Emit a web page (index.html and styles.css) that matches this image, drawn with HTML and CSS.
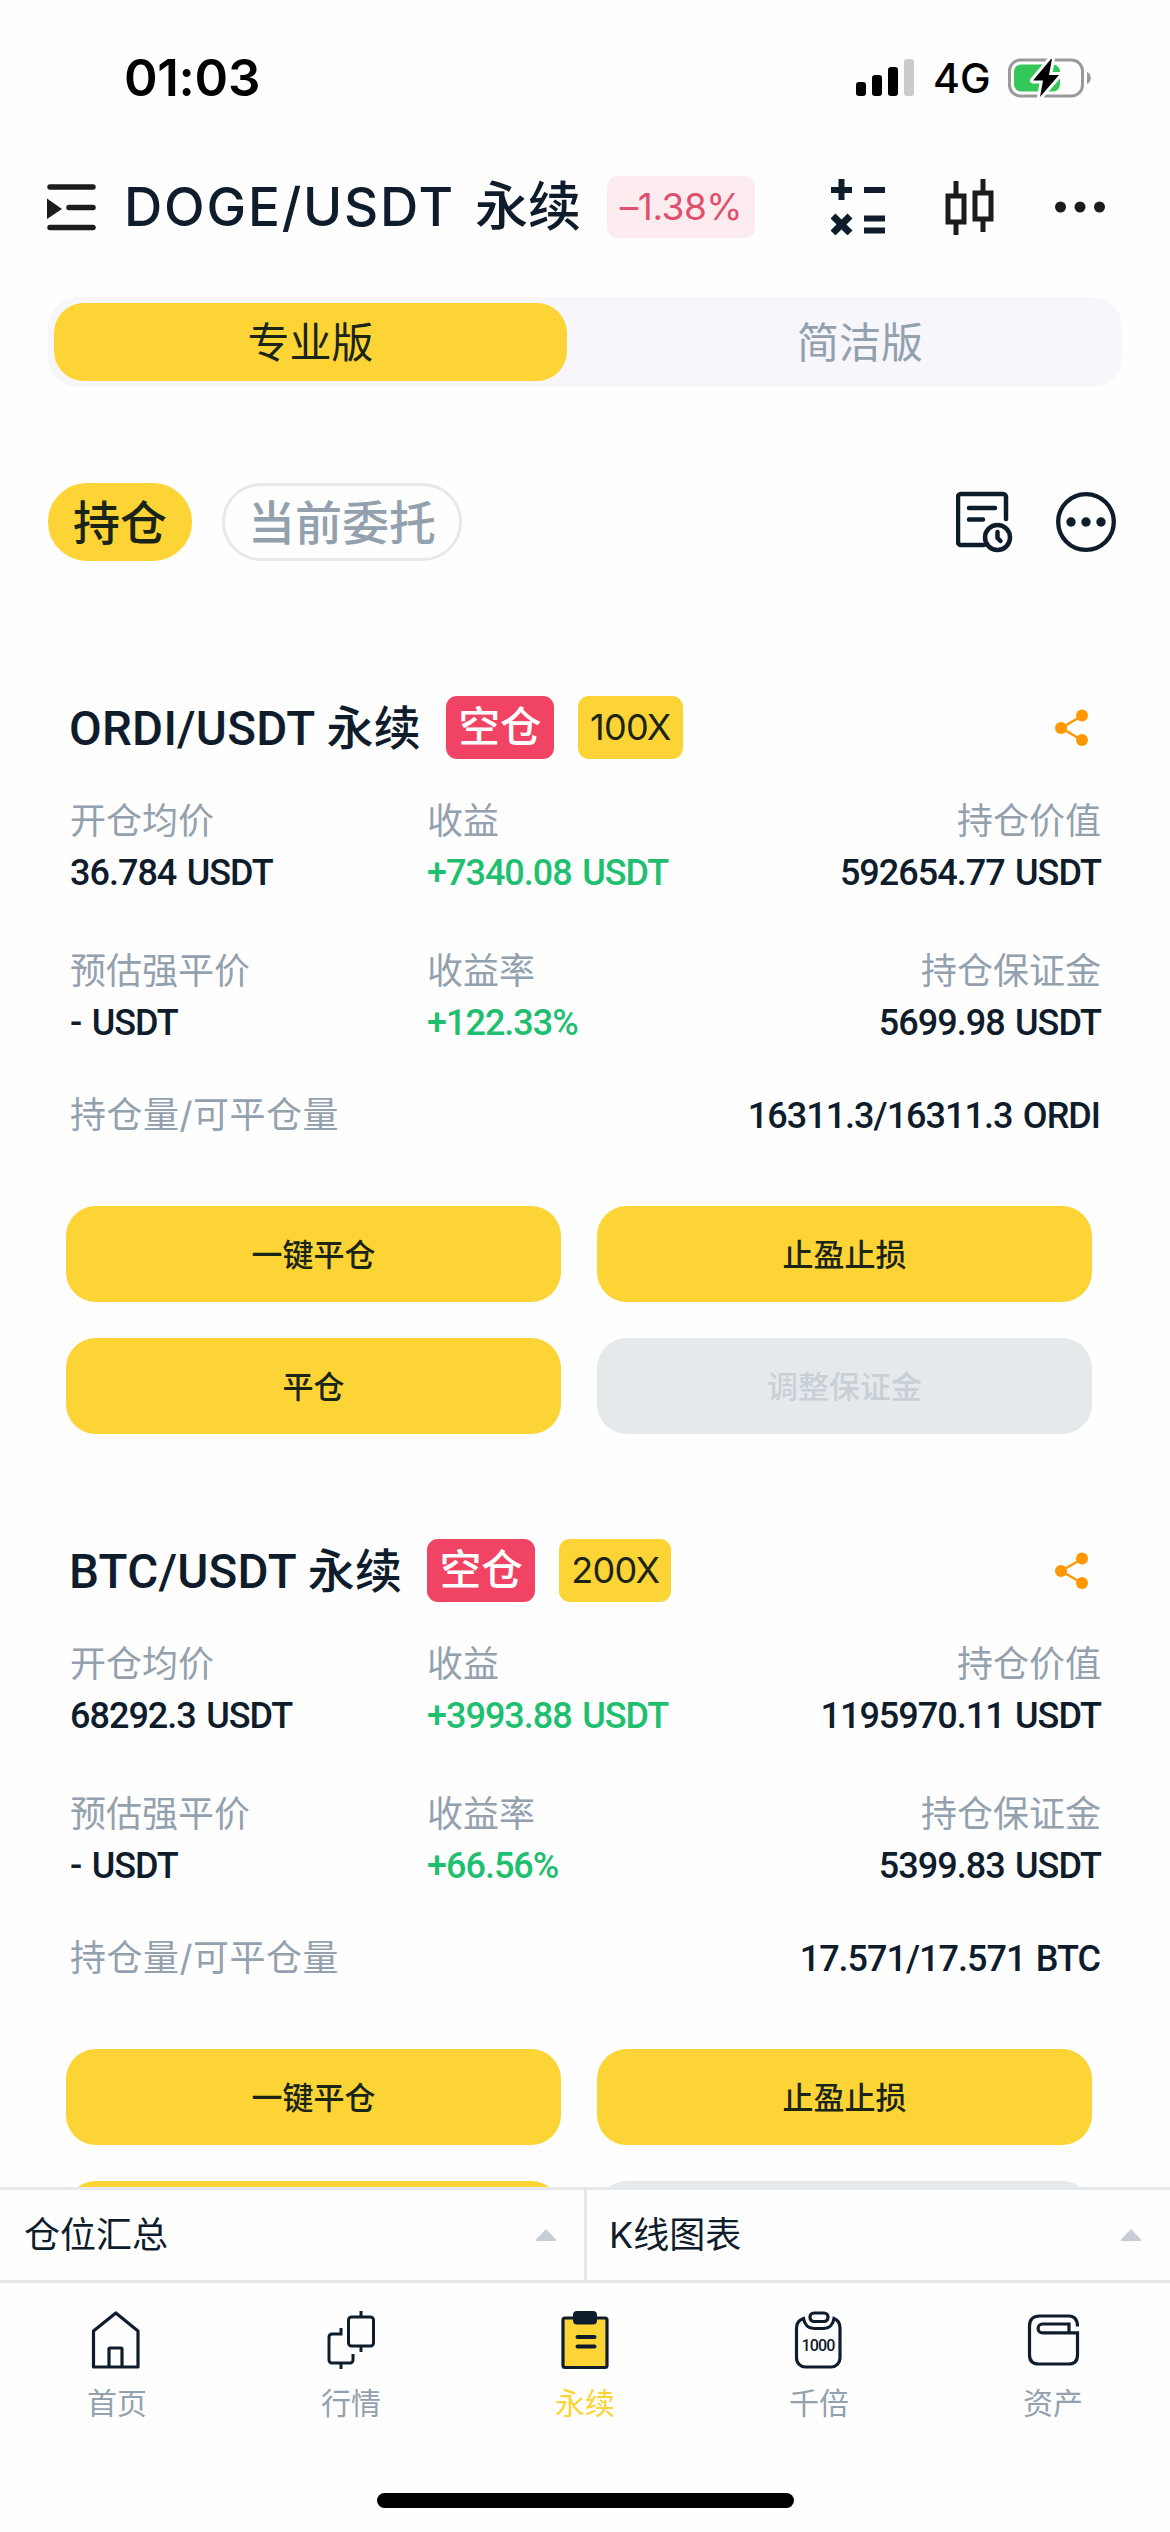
FILE: index.html
```html
<!DOCTYPE html>
<html lang="zh-CN">
<head>
<meta charset="utf-8">
<title>DOGE/USDT 永续</title>
<link rel="stylesheet" href="styles.css">
</head>
<body>
<div class="screen">
  <header class="status">
    <span class="time">01:03</span>
    <div class="status-right">
      <svg class="signal" width="58" height="38" viewBox="0 0 58 38"><rect x="0" y="23" width="10" height="14" rx="3"/><rect x="16" y="16" width="10" height="21" rx="3"/><rect x="32" y="8" width="10" height="29" rx="3"/><rect x="48" y="0" width="10" height="37" rx="3" fill="#cbcbcb"/></svg>
      <span class="net">4G</span>
      <svg class="battery" width="84" height="44" viewBox="0 0 84 44"><rect x="1.500" y="4" width="73" height="36" rx="11" fill="none" stroke="#999" stroke-width="3"/><path d="M79 16c5 2 5 10 0 12z" fill="#999"/><rect x="6" y="8.500" width="46" height="27" rx="7" fill="#35c759"/><path d="M43 3L25 24.500H35L32 41L51 19H41L44 3z" fill="#000" stroke="#fff" stroke-width="6" paint-order="stroke" stroke-linejoin="round"/></svg>
    </div>
  </header>

  <nav class="pair-bar">
    <svg class="menu" width="50" height="48" viewBox="0 0 50 48"><g stroke="#1c1c1e" stroke-width="5.500" stroke-linecap="round"><path d="M3 4H46M22 24.500H46M3 44.500H46"/></g><path d="M0 15.500L15 26L0 36z" fill="#1c1c1e"/></svg>
    <h1 class="pair"><span class="pair-latin">DOGE/USDT</span><span class="pair-cn">永续</span></h1>
    <span class="change">–1.38%</span>
    <div class="bar-icons">
      <svg width="54" height="56" viewBox="0 0 54 56"><g fill="none" stroke="#0e1c2b" stroke-width="6"><path d="M0 11H21M10.500 0V21M33 11H54M33 39.500H54M33 51.500H54"/><path d="M2 37L19 54M19 37L2 54" stroke-width="7"/></g></svg>
      <svg width="50" height="58" viewBox="0 0 50 58"><g fill="none" stroke="#1c1c1e" stroke-width="5"><path d="M11 3V17M11 44V57M38 1V14M38 41V54"/><rect x="3" y="18" width="16" height="26"/><rect x="30" y="15" width="16" height="26"/></g></svg>
      <svg width="50" height="12" viewBox="0 0 50 12" fill="#1c1c1e"><circle cx="5.500" cy="6" r="5.500"/><circle cx="25" cy="6" r="5.500"/><circle cx="44.500" cy="6" r="5.500"/></svg>
    </div>
  </nav>

  <div class="segment">
    <span class="seg seg-on">专业版</span>
    <span class="seg">简洁版</span>
  </div>

  <div class="tabs">
    <span class="tab tab-on">持仓</span>
    <span class="tab">当前委托</span>
    <div class="tab-icons">
      <svg width="58" height="62" viewBox="0 0 58 62"><g fill="none" stroke="#0e1c2b" stroke-width="4.500" stroke-linecap="round" stroke-linejoin="round"><path d="M50 28V6a3 3 0 0 0-3-3H5a3 3 0 0 0-3 3V51a3 3 0 0 0 3 3H28"/><path d="M13 17H39M13 28.500H27"/><circle cx="41.500" cy="46.500" r="12.500" fill="#fff"/><path d="M41.500 41V47L44.500 50"/></g></svg>
      <svg width="60" height="60" viewBox="0 0 60 60"><circle cx="30" cy="30" r="27.800" fill="none" stroke="#0e1c2b" stroke-width="4.300"/><g fill="#0e1c2b"><circle cx="15" cy="30" r="4.700"/><circle cx="30" cy="30" r="4.700"/><circle cx="45" cy="30" r="4.700"/></g></svg>
    </div>
  </div>

  <main class="positions">
    <section class="card">
      <div class="card-head">
        <h2 class="name">ORDI/USDT <b>永续</b></h2><span class="side">空仓</span><span class="lever">100X</span>
        <svg class="share" width="34" height="38" viewBox="0 0 34 38"><path d="M27 7L6 19L27 31" fill="none" stroke="#ff9800" stroke-width="2.500"/><g fill="#ff9800"><circle cx="27" cy="6.500" r="6"/><circle cx="6" cy="19" r="6"/><circle cx="27" cy="31" r="6"/></g></svg>
      </div>
      <dl class="stats">
        <div><dt>开仓均价</dt><dd>36.784 USDT</dd></div>
        <div><dt>收益</dt><dd class="up">+7340.08 USDT</dd></div>
        <div class="end"><dt>持仓价值</dt><dd>592654.77 USDT</dd></div>
        <div><dt>预估强平价</dt><dd>- USDT</dd></div>
        <div><dt>收益率</dt><dd class="up">+122.33%</dd></div>
        <div class="end"><dt>持仓保证金</dt><dd>5699.98 USDT</dd></div>
      </dl>
      <dl class="amount"><dt>持仓量/可平仓量</dt><dd>16311.3/16311.3 ORDI</dd></dl>
      <div class="actions">
        <span class="btn">一键平仓</span><span class="btn">止盈止损</span>
        <span class="btn">平仓</span><span class="btn btn-off">调整保证金</span>
      </div>
    </section>
    <section class="card">
      <div class="card-head">
        <h2 class="name">BTC/USDT <b>永续</b></h2><span class="side">空仓</span><span class="lever">200X</span>
        <svg class="share" width="34" height="38" viewBox="0 0 34 38"><path d="M27 7L6 19L27 31" fill="none" stroke="#ff9800" stroke-width="2.500"/><g fill="#ff9800"><circle cx="27" cy="6.500" r="6"/><circle cx="6" cy="19" r="6"/><circle cx="27" cy="31" r="6"/></g></svg>
      </div>
      <dl class="stats">
        <div><dt>开仓均价</dt><dd>68292.3 USDT</dd></div>
        <div><dt>收益</dt><dd class="up">+3993.88 USDT</dd></div>
        <div class="end"><dt>持仓价值</dt><dd>1195970.11 USDT</dd></div>
        <div><dt>预估强平价</dt><dd>- USDT</dd></div>
        <div><dt>收益率</dt><dd class="up">+66.56%</dd></div>
        <div class="end"><dt>持仓保证金</dt><dd>5399.83 USDT</dd></div>
      </dl>
      <dl class="amount"><dt>持仓量/可平仓量</dt><dd>17.571/17.571 BTC</dd></dl>
      <div class="actions">
        <span class="btn">一键平仓</span><span class="btn">止盈止损</span>
        <span class="btn"></span><span class="btn btn-off"></span>
      </div>
    </section>
  </main>

  <div class="drawers">
    <div class="drawer"><span>仓位汇总</span><svg width="20" height="12" viewBox="0 0 20 12"><path d="M10 0L20 10.500V12H0V10.500z" fill="#c6cdd5"/></svg></div>
    <div class="drawer"><span>K线图表</span><svg width="20" height="12" viewBox="0 0 20 12"><path d="M10 0L20 10.500V12H0V10.500z" fill="#c6cdd5"/></svg></div>
  </div>

  <footer class="nav">
    <div class="nav-item"><svg width="60" height="60" viewBox="0 0 60 60"><g fill="none" stroke="#0e1c2b" stroke-width="3.200" stroke-linejoin="round"><path d="M6.500 21L28.800 3L51 21V57H6.500z"/><path d="M22 57V39a1 1 0 0 1 1-1H34a1 1 0 0 1 1 1V57"/></g></svg><span>首页</span></div>
    <div class="nav-item"><svg width="60" height="60" viewBox="0 0 60 60"><g fill="none" stroke="#0e1c2b" stroke-width="3"><rect x="27.500" y="7" width="25" height="29" rx="3"/><path d="M40 1V7M40 36V42"/><path d="M20 18V24H11a3 3 0 0 0-3 3V50a3 3 0 0 0 3 3H29a3 3 0 0 0 3-3V44M20 53V59"/></g></svg><span>行情</span></div>
    <div class="nav-item on"><svg width="60" height="60" viewBox="0 0 60 60"><rect x="8" y="8" width="44" height="49.500" rx="2" fill="#fcd435" stroke="#0e1c2b" stroke-width="3.200"/><rect x="18" y="1" width="24" height="13.500" rx="4" fill="#0e1c2b"/><path d="M22.500 27H39.500M22.500 36.500H39.500" stroke="#0e1c2b" stroke-width="4" stroke-linecap="round"/></svg><span>永续</span></div>
    <div class="nav-item"><svg width="60" height="60" viewBox="0 0 60 60"><g fill="none" stroke="#0e1c2b" stroke-width="3.200"><rect x="21" y="3" width="18" height="8.500" rx="4"/><path d="M14.500 8.500C10 10 7.500 13 7.500 18V48a9 9 0 0 0 9 9H42a9 9 0 0 0 9-9V18C51 13 49 10 45 8.500C44 15 40 18.500 35 18.500H25C20 18.500 15.500 15 14.500 8.500z"/></g><text x="29" y="41" text-anchor="middle" class="k">1000</text></svg><span>千倍</span></div>
    <div class="nav-item"><svg width="60" height="60" viewBox="0 0 60 60"><g fill="none" stroke="#0e1c2b" stroke-width="3.200"><path d="M54.500 16.500C54.500 9 51.500 6 45.500 6H17C10 6 6.500 9 6.500 16V45C6.500 51 10 54 16 54H45.500C51.500 54 54.500 51 54.500 45V22.800H19.500a4.400 4.400 0 0 1 0-8.800H46V22.800"/></g></svg><span>资产</span></div>
  </footer>
  <div class="home-bar"></div>
</div>
</body>
</html>
```

FILE: styles.css
```css
* { box-sizing: border-box; margin: 0; padding: 0; }
body { background: #fff; color: #0e1c2b; font-family: "Inter", "Noto Sans CJK SC", sans-serif; }
svg { display: block; flex: none; }
span, h1, h2, dt, dd { white-space: nowrap; }
.screen { width: 1170px; height: 2532px; background: #fefefe; display: flex; flex-direction: column; overflow: hidden; }

.status { height: 156px; flex: none; display: flex; justify-content: space-between; padding: 0 78px 0 124px; color: #000; }
.time { font-size: 51px; font-weight: 600; line-height: 60px; padding-top: 48px; letter-spacing: -0.300px; }
.status-right { display: flex; align-items: center; height: 156px; }
.signal { margin-right: 19px; }
.net { font-size: 41px; line-height: 44px; width: 57px; margin-right: 18px; font-weight: 500; }

.pair-bar { height: 102px; flex: none; display: flex; align-items: center; padding: 0 65px 0 47px; }
.menu { margin-right: 27px; }
.pair { display: flex; gap: 20px; align-items: center; font-size: 53px; font-weight: 500; line-height: 70px; }
.pair-latin { width: 331px; letter-spacing: 1.800px; }
.change { width: 148px; height: 62px; margin-left: 26px; border-radius: 10px; background: #fcebef; color: #e0506e; font-size: 37px; line-height: 62px; text-align: center; letter-spacing: -0.500px; }
.bar-icons { margin-left: auto; display: flex; align-items: center; gap: 60px; }

.segment { height: 90px; flex: none; margin: 39px 48px 0; background: #f6f6fb; border-radius: 30px; display: flex; padding: 6px; }
.seg { width: 549px; padding: 1px 0 0 37px; text-align: center; font-size: 42px; line-height: 78px; color: #93a1ae; border-radius: 30px; }
.seg-on { width: 513px; padding-left: 0; background: #fcd435; color: #1a2417; }

.tabs { height: 78px; flex: none; margin: 96px 54px 0 48px; display: flex; align-items: center; }
.tab { height: 78px; border: 3px solid #e6e9ec; border-radius: 39px; font-size: 47px; font-weight: 500; line-height: 73px; color: #93a1ae; margin-left: 30px; width: 240px; text-align: center; }
.tab-on { width: 144px; margin-left: 0; background: #fcd435; border-color: #fcd435; color: #1a2417; }
.tab-icons { margin-left: auto; display: flex; gap: 42px; align-items: center; }

.positions { height: 1626px; flex: none; padding-top: 135px; overflow: hidden; }
.card { height: 843px; }
.card-head { height: 63px; display: flex; align-items: center; padding: 0 81px 0 69px; }
.name { font-family: "Roboto", "Noto Sans CJK SC", sans-serif; font-size: 47.500px; font-weight: 500; line-height: 63px; padding-top: 2px; letter-spacing: 0.250px; }
.name b { font-weight: 500; font-size: 47px; }
.side, .lever { height: 63px; border-radius: 11px; text-align: center; margin-left: 24px; line-height: 63px; }
.side { width: 108px; background: #f14465; color: #fff; font-size: 41.500px; font-weight: 500; margin-left: 25px; }
.lever { padding: 0 12px; background: #fcd435; color: #1a2417; font-size: 36px; letter-spacing: -0.700px; }
.share { margin-left: auto; }

.stats { display: grid; grid-template-columns: 357px 357px 1fr; grid-template-rows: 150px 150px; padding: 33px 69px 0 70px; }
dt { font-size: 36px; line-height: 58px; color: #93a1ae; }
dd { font-family: "Roboto", sans-serif; font-size: 36px; font-weight: 500; line-height: 46px; letter-spacing: -1px; word-spacing: 2.500px; }
.up { color: #1fbf70; }
.end { text-align: right; }
.amount { display: flex; justify-content: space-between; align-items: center; padding: 0 70px; height: 58px; margin-top: -6px; }
.amount dt { letter-spacing: 0.500px; }
.amount dd { padding-top: 1px; }
.actions { display: grid; grid-template-columns: 495px 495px; grid-template-rows: 96px 96px; gap: 36px; padding: 62px 66px 0; }
.btn { border-radius: 30px; background: #fcd435; color: #1a2417; font-size: 31px; font-weight: 500; line-height: 98px; text-align: center; height: 96px; }
.btn-off { background: #e6e9ec; color: #c8d0d7; }

.drawers { height: 96px; flex: none; display: grid; grid-template-columns: 587px 583px; border-top: 3px solid #e6e9ec; border-bottom: 3px solid #e6e9ec; background: #fefefe; }
.drawer { display: flex; align-items: center; justify-content: space-between; padding: 0 28px 0 24px; font-size: 36px; line-height: 90px; }
.drawer:first-child { border-right: 3px solid #e6e9ec; }
.drawer:last-child { padding: 0 29px 0 22px; }

.nav { height: 210px; flex: none; display: grid; grid-template-columns: repeat(5, 1fr); padding-top: 27px; }
.nav-item { display: flex; flex-direction: column; align-items: center; font-size: 30px; line-height: 44px; color: #93a1ae; gap: 11px; }
.on { color: #fcd435; }
.k { font: 500 16px "Roboto", sans-serif; letter-spacing: -0.800px; fill: #0e1c2b; }
.home-bar { width: 417px; height: 15px; flex: none; margin: 0 auto; border-radius: 8px; background: #000; }
```
